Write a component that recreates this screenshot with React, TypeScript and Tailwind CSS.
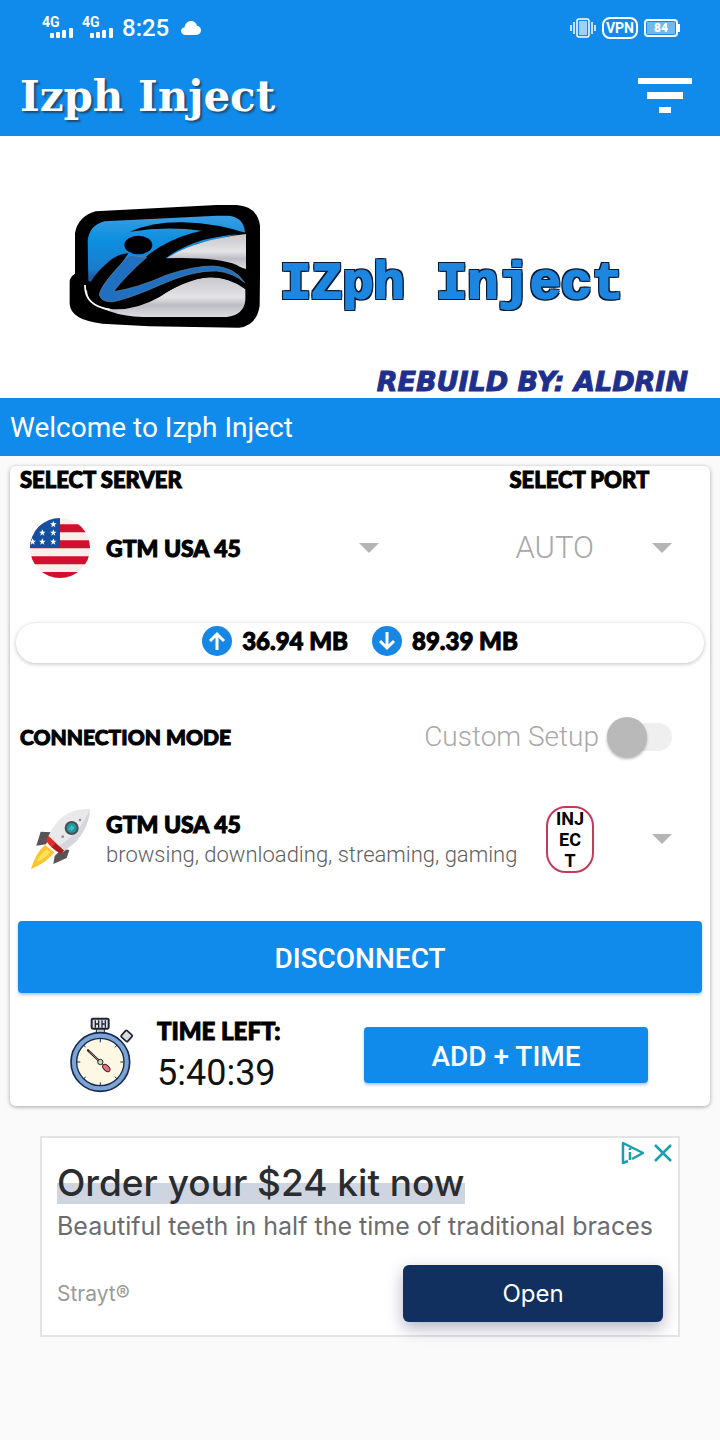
import React, { useState } from 'react';

const display = "font-['Lato','Open_Sans',sans-serif] font-black text-black [-webkit-text-stroke:1px_#000]";

function SignalIcon() {
  return (
    <div className="h-6 w-8 text-white">
      <div className="font-['Roboto',sans-serif] text-[14px] font-bold leading-3">4G</div>
      <svg viewBox="0 0 32 12" className="block h-3 w-8" fill="currentColor">
        <rect x="8" y="5" width="4" height="5" rx="1" />
        <rect x="14" y="4" width="4" height="6" rx="1" />
        <rect x="20" y="2" width="4" height="8" rx="1" />
        <rect x="27" y="0" width="4" height="10" rx="1" />
      </svg>
    </div>
  );
}

function StatusBar() {
  return (
    <div className="flex h-14 items-center justify-between pl-[42px] pr-10 text-white">
      <div className="flex items-center gap-2">
        <SignalIcon />
        <SignalIcon />
        <span className="font-['Roboto',sans-serif] text-2xl font-medium">8:25</span>
        <svg viewBox="0 0 20 14" className="ml-1 h-[14px] w-5" fill="currentColor">
          <path d="M4.5 14C2 14 0 12.300 0 10c0-2 1.600-3.600 3.600-3.800C4.200 2.500 6.700 0 10 0c3 0 5.300 1.900 6 4.800 2.300.3 4 2.100 4 4.500 0 2.700-2 4.700-4.700 4.700z" />
        </svg>
      </div>
      <div className="flex items-center gap-[6px]">
        <svg viewBox="0 0 26 20" className="h-5 w-[26px]" fill="none" stroke="currentColor">
          <rect x="7" y="1" width="12" height="18" rx="2" strokeWidth="1.500" />
          <rect x="9" y="3" width="8" height="14" fill="currentColor" fillOpacity="0.600" stroke="none" />
          <path d="M4 4v12M1 7v6M22 4v12M25 7v6" strokeWidth="1.500" />
        </svg>
        <span className="rounded-lg border-2 border-white px-[2px] font-['Roboto',sans-serif] text-[14px] font-bold leading-[18px]">VPN</span>
        <div className="flex items-center">
          <div className="h-[18px] w-[34px] rounded border-2 border-white p-px">
            <div className="bg-white/40 text-center font-['Roboto',sans-serif] text-[12px] font-black leading-3">84</div>
          </div>
          <div className="h-2 w-0.5 bg-white" />
        </div>
      </div>
    </div>
  );
}

function Logo() {
  return (
    <svg viewBox="0 0 690 450" className="h-[150px] w-[230px] shrink-0" role="img" aria-label="IZph logo">
      <defs>
        <linearGradient id="sky" x1="0" y1="0" x2="0" y2="1">
          <stop offset="0" stopColor="#3a9ee4" />
          <stop offset="0.300" stopColor="#0d90e0" />
          <stop offset="0.700" stopColor="#1a7ccc" />
          <stop offset="0.800" stopColor="#1c5ea6" />
        </linearGradient>
        <linearGradient id="steel" x1="0" y1="0" x2="0" y2="1">
          <stop offset="0" stopColor="#c6c6cc" />
          <stop offset="0.500" stopColor="#e4e4e6" />
          <stop offset="0.700" stopColor="#bcbcc4" />
          <stop offset="1" stopColor="#dddde0" />
        </linearGradient>
      </defs>
      <path fill="#000" d="M75 130q8-50 62-66L500 45h60q62 4 70 62v150l-1 90q-10 62-62 66l-270-4-140-8q-94-10-98-58v-70q2-14 16-22z" />
      <path fill="url(#sky)" d="M113 150q6-44 50-56L500 77h35q46 4 50 50l-145 35-100 50-140 95-85-35z" />
      <path fill="url(#steel)" d="M588 132Q430 150 347 207q130-6 241 30z" />
      <path fill="url(#steel)" d="M200 356q70 0 140-44 90-52 150-50 60 4 96 34v35q-4 44-56 50H280q-120-4-165-60-12-20-12-38 20 70 97 73z" />
      <path
        fill="#000"
        d="M240 125Q310 95 400 97Q500 100 590 130Q480 140 430 160Q370 185 347 205Q500 200 560 225L625 262L590 300Q540 262 480 262Q410 265 330 320Q260 360 190 358Q115 350 112 310Q115 270 165 225Q200 190 235 190L150 315Q160 330 190 305Q250 220 330 170Q390 135 455 122Q350 108 240 125z"
      />
      <path
        fill="#1f70c0"
        stroke="#6f8296"
        strokeWidth="2"
        d="M238 196Q150 285 148 315Q155 338 190 335Q240 325 330 285Q430 240 500 243Q550 248 584 278Q555 232 490 228Q430 228 350 255Q260 295 190 305Q225 260 290 202z"
      />
      <ellipse cx="265" cy="165" rx="42" ry="28" fill="#000" />
      <path fill="none" stroke="#fff" strokeWidth="5" d="M105 285q-2 62 75 74" />
    </svg>
  );
}

function FlagIcon() {
  const stars = [[160, 192], [127, 217], [160, 217], [98, 244], [127, 244], [160, 244]];
  return (
    <svg viewBox="90 173 180 180" className="size-[60px] shrink-0">
      <clipPath id="round">
        <circle cx="180" cy="263" r="90" />
      </clipPath>
      <g clipPath="url(#round)">
        <rect x="90" y="173" width="180" height="180" fill="#fdeeee" />
        <path fill="#d0102f" d="M90 192h180v24H90zM90 240h180v24H90zM90 288h180v24H90zM90 335h180v20H90z" />
        <rect x="90" y="173" width="90" height="90" fill="#1450a0" />
        {stars.map(([x, y]) => (
          <path
            key={`${x}-${y}`}
            transform={`translate(${x} ${y})`}
            fill="#fff"
            d="M0-10 3-3 10-3 4 2 6 9 0 5-6 9-4 2-10-3-3-3z"
          />
        ))}
      </g>
    </svg>
  );
}

function RocketIcon() {
  return (
    <svg viewBox="90 55 180 180" className="size-[60px] shrink-0">
      <path fill="#fbc52d" d="M93 235q14-48 42-72l28 22q-24 32-70 50z" />
      <path fill="#fde25a" d="M110 214q12-26 30-38l10 8q-14 20-40 30z" />
      <path fill="#5a5355" d="M109 165l13-42 34 2-18 36zM160 220l4-24 22-22 22 4-8 24z" />
      <path fill="#e9e9ec" d="M270 55q-2 52-42 98l-38 30-46-44q22-52 62-72 30-14 64-12z" />
      <path fill="#d6d6dc" d="M270 55q-2 52-42 98l-38 30-14-16q66-44 94-112z" />
      <path fill="#e02d26" d="M146 136l46 44-12 8q-28-16-42-38z" />
      <path fill="#a81c1c" d="M166 158l26 22-12 8-24-18z" />
      <circle cx="215" cy="112" r="21" fill="#4c4c55" />
      <circle cx="215" cy="112" r="15" fill="#1a9ba0" />
      <path stroke="#54c8c8" strokeWidth="4" d="M207 117l10-12M213 119l8-10" />
      <circle cx="240" cy="88" r="4" fill="#8d8d98" />
      <circle cx="188" cy="138" r="4" fill="#8d8d98" />
    </svg>
  );
}

function StopwatchIcon() {
  return (
    <svg viewBox="208 350 195 228" className="h-[76px] w-[65px] shrink-0">
      <rect x="290" y="384" width="24" height="16" fill="#c3cbd6" stroke="#20242e" strokeWidth="3" />
      <rect x="276" y="355" width="51" height="30" rx="4" fill="#dfe5ee" stroke="#20242e" strokeWidth="6" />
      <path stroke="#20242e" strokeWidth="4" d="M287 360v22M297 360v22M307 360v22M317 360v22" />
      <path stroke="#20242e" strokeWidth="4" d="M287 371h8M307 371h8" />
      <rect x="-13" y="-13" width="26" height="26" rx="4" transform="translate(381 407) rotate(42)" fill="#d9dde3" stroke="#20242e" strokeWidth="5" />
      <circle cx="302" cy="485" r="88" fill="#7ba3d4" stroke="#16294f" strokeWidth="5" />
      <circle cx="302" cy="485" r="71" fill="#fdf8e4" stroke="#16294f" strokeWidth="4" />
      <path stroke="#16294f" strokeWidth="3" d="M302 416v10M302 546v10M232 485h10M362 485h10M252 434l6 7M352 434l-6 7M252 536l6-7M352 536l-6-7" />
      <path stroke="#33262b" strokeWidth="7" strokeLinecap="round" d="M265 450l37 35" />
      <path stroke="#c9a0a0" strokeWidth="2" d="M268 453l30 28" />
      <path stroke="#33262b" strokeWidth="3" d="M302 485l14 14" />
      <ellipse cx="320" cy="503" rx="13" ry="8" transform="rotate(45 320 503)" fill="#ee6c84" stroke="#33262b" strokeWidth="3" />
      <circle cx="302" cy="485" r="8" fill="#b9e3b4" stroke="#33262b" strokeWidth="3" />
    </svg>
  );
}

function Caret() {
  return (
    <svg viewBox="0 0 20 10" className="pointer-events-none h-[10px] w-5 shrink-0" fill="#b5b5b5">
      <path d="M0 0h20L10 10z" />
    </svg>
  );
}

function ArrowBadge({ down = false }: { down?: boolean }) {
  return (
    <svg viewBox="0 0 30 30" className="size-[30px]">
      <circle cx="15" cy="15" r="15" fill="#1787e6" />
      <path
        d={down ? 'M15 6v16M8 15l7 7 7-7' : 'M15 24V8M8 15l7-7 7 7'}
        fill="none"
        stroke="#fff"
        strokeWidth="3"
      />
    </svg>
  );
}

function AdCard() {
  return (
    <section className="mx-10 mt-[30px] border-2 border-[#e4e4e4] bg-white font-['Inter',sans-serif]">
      <div className="flex justify-between">
        <h2 className="ml-[15px] mt-6 bg-linear-to-b from-transparent from-50% to-[#cfd5e0] to-50% text-[37px] font-medium leading-[42px] text-[#2a2c30]">
          Order your $24 kit now
        </h2>
        <div className="flex h-[30px] items-center gap-2 pr-[5px] text-[#1a9fae]">
          <button type="button" aria-label="Ad choices">
            <svg viewBox="0 0 24 24" className="size-6" fill="none" stroke="currentColor" strokeWidth="2.500">
              <path d="M7 20l-5 2V2l20 10-11 6" strokeLinejoin="round" />
              <path d="M9 11v8M9 7v2" />
            </svg>
          </button>
          <button type="button" aria-label="Close ad">
            <svg viewBox="0 0 20 20" className="size-5" fill="none" stroke="currentColor" strokeWidth="2.500">
              <path d="M2 2l16 16M18 2L2 18" />
            </svg>
          </button>
        </div>
      </div>
      <p className="whitespace-nowrap px-[15px] pt-1 text-[25px] leading-9 text-[#6a6c70]">
        Beautiful teeth in half the time of traditional braces
      </p>
      <div className="flex items-center justify-between px-[15px] pb-[13px] pt-[21px]">
        <span className="text-[21px] text-[#9a9a9a]">Strayt®</span>
        <button type="button" className="h-[57px] w-[260px] rounded-md bg-[#12305f] text-2xl text-white shadow-[0_6px_16px_rgba(40,40,90,0.350)]">
          Open
        </button>
      </div>
    </section>
  );
}

export default function App() {
  const [server, setServer] = useState('GTM USA 45');
  const [mode, setMode] = useState('GTM USA 45');

  return (
    <div className="min-h-screen bg-[#fafafa] font-['Roboto',sans-serif]">
      <header className="bg-[#108bec]">
        <StatusBar />
        <div className="flex h-20 items-center justify-between pl-5 pr-7">
          <h1 className="font-['DejaVu_Serif',serif] text-[42px] font-bold text-white [text-shadow:2px_2px_2px_#1d4a70]">
            Izph Inject
          </h1>
          <button type="button" aria-label="Menu">
            <svg viewBox="0 0 54 36" className="h-9 w-[54px]" fill="#fff">
              <path d="M0 0h54v6H0zM9 14h36v7H9zM21 29h12v6H21z" />
            </svg>
          </button>
        </div>
      </header>

      {/* Banner */}
      <div className="flex h-[262px] flex-col justify-between bg-white pt-[54px]">
        <div className="flex items-center pl-[50px]">
          <Logo />
          <span className="whitespace-pre pt-10 font-['Liberation_Mono',monospace] text-[52px] font-bold text-[#1c86e0] [-webkit-text-stroke:2px_#1c86e0] [text-shadow:2px_0_#0c1a30,-2px_0_#0c1a30,0_2px_#0c1a30,0_-2px_#0c1a30,2px_2px_#0c1a30,-2px_-2px_#0c1a30,2px_-2px_#0c1a30,-2px_2px_#0c1a30]">
            IZph Inject
          </span>
        </div>
        <p className="pr-8 text-right font-['DejaVu_Sans',sans-serif] text-[27px] font-bold italic leading-8 text-[#1f2f8c] [-webkit-text-stroke:1px_#1f2f8c]">
          REBUILD BY: ALDRIN
        </p>
      </div>
      <p className="bg-[#108bec] px-[10px] pb-[11px] pt-[13px] text-[28px] leading-[34px] text-white">Welcome to Izph Inject</p>

      <main className="mx-[10px] mt-[10px] rounded-md bg-white pb-[11px] shadow-[0_1px_4px_rgba(0,0,0,0.350)]">
        <div className="grid grid-cols-[7fr_4fr]">
          <div className="pl-[10px]">
            <label htmlFor="server" className={`${display} block text-[22px] leading-7`}>SELECT SERVER</label>
            <div className="flex h-[108px] items-center pl-[10px] pr-[76px]">
              <FlagIcon />
              <select
                id="server"
                value={server}
                onChange={(e) => setServer(e.target.value)}
                className={`${display} ml-4 min-w-0 flex-1 appearance-none text-[23px]`}
              >
                <option>GTM USA 45</option>
              </select>
              <Caret />
            </div>
          </div>
          <div className="pr-[38px]">
            <label htmlFor="port" className={`${display} block pl-[54px] text-[22px] leading-7`}>SELECT PORT</label>
            <div className="flex h-[108px] items-center pl-[60px]">
              <select id="port" disabled className="min-w-0 flex-1 appearance-none text-[31px] font-light text-[#a8a8a8]">
                <option>AUTO</option>
              </select>
              <Caret />
            </div>
          </div>
        </div>

        <div className={`${display} mx-[6px] mt-[21px] flex h-10 items-center justify-center gap-6 rounded-full pb-1 text-[24px] shadow-[0_1px_4px_rgba(0,0,0,0.250)]`}>
          <span className="flex items-center gap-[10px]">
            <ArrowBadge />
            36.94 MB
          </span>
          <span className="flex items-center gap-[10px]">
            <ArrowBadge down />
            89.39 MB
          </span>
        </div>

        <div className="mt-[52px] flex h-11 items-center justify-between pl-[10px] pr-[38px]">
          <label htmlFor="mode" className={`${display} text-[21px]`}>CONNECTION MODE</label>
          <label className="flex items-center gap-2 text-[28px] font-light text-[#a8a8a8]">
            Custom Setup
            <input
              type="checkbox"
              role="switch"
              disabled
              className="flex h-11 w-[65px] appearance-none items-center before:z-10 before:size-10 before:rounded-full before:bg-[#b9b9b9] before:shadow-[0_2px_3px_rgba(0,0,0,0.300)] before:content-[''] after:-ml-5 after:h-7 after:flex-1 after:rounded-r-full after:bg-[#efefef] after:content-['']"
            />
          </label>
        </div>

        <div className="mt-[43px] flex h-[74px] items-center pl-5 pr-[38px]">
          <RocketIcon />
          <div className="ml-4 min-w-0 flex-1">
            <select
              id="mode"
              value={mode}
              onChange={(e) => setMode(e.target.value)}
              className={`${display} block w-full appearance-none text-[23px] leading-8`}
            >
              <option>GTM USA 45</option>
            </select>
            <p className="whitespace-nowrap text-[22px] font-light leading-[30px] text-[#606060]">browsing, downloading, streaming, gaming</p>
          </div>
          <span className="mr-[58px] w-12 shrink-0 rounded-[20px] border-2 border-[#c43a58] text-center text-[18px] font-bold leading-[21px] text-black">
            INJ
            <br />
            EC
            <br />
            T
          </span>
          <Caret />
        </div>

        <div className="mt-[45px] px-2">
          <button type="button" className="h-[72px] w-full rounded bg-[#108bec] pt-1 text-[28px] font-medium text-white shadow-[0_2px_3px_rgba(16,100,200,0.350)]">
            DISCONNECT
          </button>
        </div>

        <div className="mt-[22px] flex items-center justify-between pl-[59px] pr-[62px]">
          <div className="flex items-center gap-[23px]">
            <StopwatchIcon />
            <div>
              <div className={`${display} text-[24px] leading-8`}>TIME LEFT:</div>
              <div className="pt-1 text-[36px] leading-[44px] text-[#111]">5:40:39</div>
            </div>
          </div>
          <button type="button" className="h-14 w-[284px] rounded bg-[#108bec] pt-1 text-[28px] font-medium text-white shadow-[0_2px_3px_rgba(16,100,200,0.350)]">
            ADD + TIME
          </button>
        </div>
      </main>

      <AdCard />
    </div>
  );
}
